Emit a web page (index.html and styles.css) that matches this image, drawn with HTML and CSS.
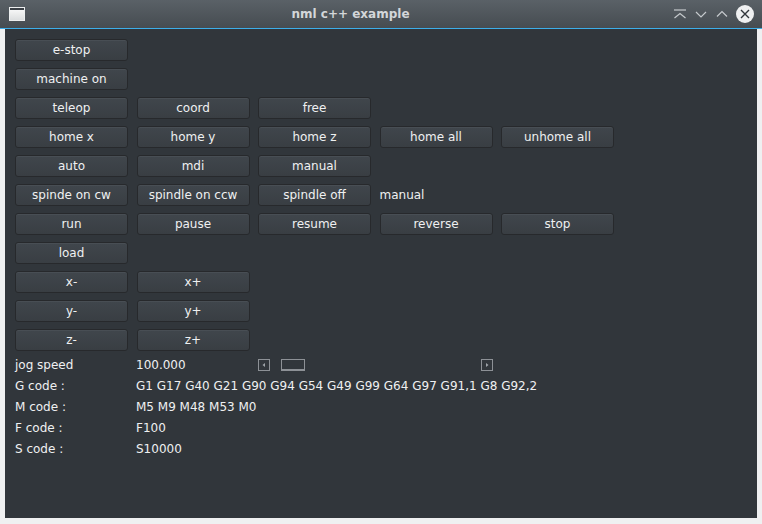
FILE: index.html
```html
<!DOCTYPE html>
<html>
<head>
<meta charset="utf-8">
<link rel="stylesheet" href="styles.css">
</head>
<body>
<div class="window">
  <div class="titlebar">
    <div class="appicon"><div class="appicon-bar"></div></div>
    <div class="title">nml c++ example</div>
    <div class="controls">
      <svg class="ctl" width="14" height="14" viewBox="0 0 14 14"><path d="M1 3H13" stroke="#c6cacd" stroke-width="1.2" fill="none"/><path d="M1.5 11L7 6.5L12.5 11" stroke="#c6cacd" stroke-width="1.2" fill="none"/></svg>
      <svg class="ctl" width="14" height="14" viewBox="0 0 14 14"><path d="M2 5L7 10L12 5" stroke="#c6cacd" stroke-width="1.2" fill="none"/></svg>
      <svg class="ctl" width="14" height="14" viewBox="0 0 14 14"><path d="M2 9.5L7 4.5L12 9.5" stroke="#c6cacd" stroke-width="1.2" fill="none"/></svg>
      <svg class="close" width="18" height="18" viewBox="0 0 18 18"><circle cx="9" cy="9" r="9" fill="#eff0f1"/><path d="M5 5L13 13M13 5L5 13" stroke="#31363b" stroke-width="1.4"/></svg>
    </div>
  </div>
  <div class="accent"></div>
  <div class="frame">
    <div class="content">
      <div class="buttons">
        <div class="row"><button class="btn">e-stop</button></div>
        <div class="row"><button class="btn">machine on</button></div>
        <div class="row"><button class="btn">teleop</button><button class="btn">coord</button><button class="btn">free</button></div>
        <div class="row"><button class="btn">home x</button><button class="btn">home y</button><button class="btn">home z</button><button class="btn">home all</button><button class="btn">unhome all</button></div>
        <div class="row"><button class="btn">auto</button><button class="btn">mdi</button><button class="btn">manual</button></div>
        <div class="row"><button class="btn">spinde on cw</button><button class="btn">spindle on ccw</button><button class="btn">spindle off</button><span class="status">manual</span></div>
        <div class="row"><button class="btn">run</button><button class="btn">pause</button><button class="btn">resume</button><button class="btn">reverse</button><button class="btn">stop</button></div>
        <div class="row"><button class="btn">load</button></div>
        <div class="row"><button class="btn">x-</button><button class="btn">x+</button></div>
        <div class="row"><button class="btn">y-</button><button class="btn">y+</button></div>
        <div class="row"><button class="btn">z-</button><button class="btn">z+</button></div>
      </div>
      <div class="info">
        <div class="irow"><span class="lbl">jog speed</span><span class="val">100.000</span>
          <div class="scroll">
            <div class="arrow"><svg width="12" height="12" viewBox="0 0 12 12"><path d="M7 4L4.5 6L7 8Z" fill="#9ea3a8"/></svg></div>
            <div class="track"><div class="handle"></div></div>
            <div class="arrow"><svg width="12" height="12" viewBox="0 0 12 12"><path d="M5 4L7.5 6L5 8Z" fill="#9ea3a8"/></svg></div>
          </div>
        </div>
        <div class="irow"><span class="lbl">G code :</span><span class="val">G1 G17 G40 G21 G90 G94 G54 G49 G99 G64 G97 G91,1 G8 G92,2</span></div>
        <div class="irow"><span class="lbl">M code :</span><span class="val">M5 M9 M48 M53 M0</span></div>
        <div class="irow"><span class="lbl">F code :</span><span class="val">F100</span></div>
        <div class="irow"><span class="lbl">S code :</span><span class="val">S10000</span></div>
      </div>
    </div>
  </div>
</div>
</body>
</html>
```
FILE: styles.css
```css
html, body {
  margin: 0;
  padding: 0;
  width: 762px;
  height: 524px;
  overflow: hidden;
  background: #eff0f1;
  font-family: "DejaVu Sans", "Liberation Sans", sans-serif;
}
.window {
  display: flex;
  flex-direction: column;
  height: 524px;
}
.titlebar {
  height: 28px;
  display: flex;
  align-items: center;
  background: linear-gradient(#5a6167, #464c51);
  color: #d3d6d9;
}
.appicon {
  width: 16px;
  height: 14px;
  margin-left: 9px;
  background: linear-gradient(#fbfbfb, #dcdedf);
  box-sizing: border-box;
  border: 1px solid #eceeef;
}
.appicon-bar {
  height: 2px;
  background: #3b4046;
}
.title {
  flex: 1;
  text-align: center;
  font-weight: bold;
  font-size: 12px;
  padding-left: 3px;
}
.controls {
  display: flex;
  align-items: center;
  gap: 7px;
  margin-right: 8px;
}
.ctl { display: block; }
.close { display: block; }
.accent {
  height: 1px;
  background: #3daee9;
}
.frame {
  flex: 1;
  padding: 0 5px 6px 5px;
  display: flex;
}
.content {
  flex: 1;
  background: #31363b;
  padding: 10px 10px 0 10px;
  color: #eff0f1;
  font-size: 12px;
}
.buttons {
  display: flex;
  flex-direction: column;
  gap: 7px;
}
.row {
  display: grid;
  grid-template-columns: repeat(5, 113px);
  column-gap: 8.5px;
  height: 22px;
  align-items: center;
}
.btn {
  height: 22px;
  margin: 0;
  padding: 0;
  font-family: inherit;
  font-size: 12px;
  color: #eff0f1;
  background: linear-gradient(#40464c, #393e43);
  border: 1px solid #27292c;
  border-radius: 3px;
  box-shadow: inset 0 1px 0 #484e54;
  line-height: 20px;
}
.info {
  margin-top: 3px;
  display: flex;
  flex-direction: column;
}
.irow {
  height: 21px;
  display: grid;
  grid-template-columns: 121px 122px 235px;
  align-items: center;
  white-space: nowrap;
}
.scroll {
  display: flex;
  align-items: center;
  height: 12px;
}
.arrow {
  width: 12px;
  height: 12px;
  box-sizing: border-box;
  border: 1px solid #8d9196;
  display: flex;
}
.arrow svg { display: block; margin: -1px; }
.track {
  flex: 1;
  height: 12px;
  padding-left: 11px;
}
.handle {
  width: 24px;
  height: 12px;
  box-sizing: border-box;
  border: 1px solid #8d9196;
  border-bottom-width: 2px;
}
```
